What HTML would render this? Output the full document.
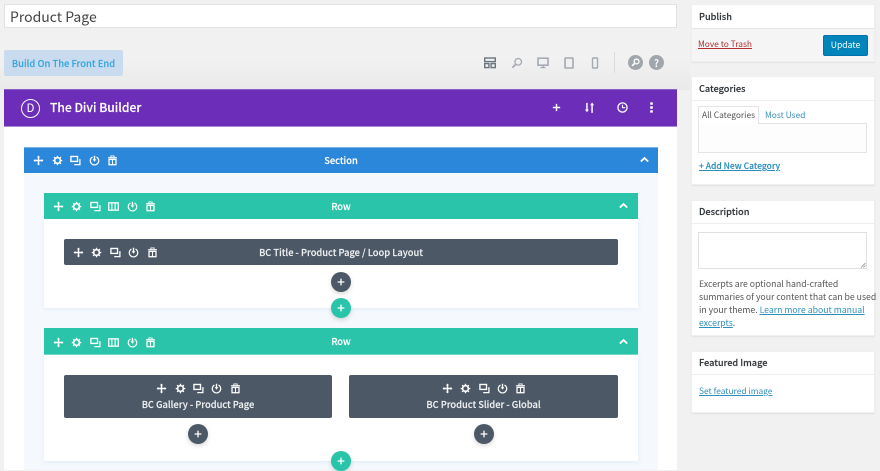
<!DOCTYPE html>
<html lang="en">
<head>
<meta charset="utf-8">
<title>Product Page</title>
<style>
html,body{margin:0;padding:0}
body{width:880px;height:470px;overflow:hidden;position:relative;background:#f1f1f1;font-family:"Noto Sans CJK JP","Liberation Sans",sans-serif;color:#444}
.a{position:absolute;box-sizing:border-box}
.t{position:absolute;white-space:nowrap}
.c{text-align:center}
.b{font-weight:500;-webkit-text-stroke:.15px currentColor}
svg{position:absolute;overflow:visible}
.ic{width:11px;height:11px;margin:.5px 0 0 .5px;fill:none;stroke:#fff;stroke-width:1.4}
.box{position:absolute;box-sizing:border-box;background:#fff;left:691px;width:184px;box-shadow:0 1px 1px rgba(0,0,0,.06);border:1px solid #efefef}
.line{position:absolute;left:691px;width:184px;height:1px;background:#eee}
.h{font-size:9.2px;font-weight:500;color:#32373c;left:699px;-webkit-text-stroke:.15px currentColor}
.lnk{color:#2e8fbd;text-decoration:underline;font-size:8.4px}
.circ{position:absolute;width:20px;height:20px;border-radius:50%;box-shadow:0 2px 5px rgba(0,0,0,.15)}
.d{background:#4c5866}.g{background:#29c4a9}
.x{font-size:8.7px;color:#555;left:699px;line-height:13px}
.m{font-size:9.3px}
</style>
</head>
<body>
<svg width="0" height="0" style="position:absolute">
<defs>
<symbol id="mv" viewBox="0 0 12 12"><path d="M6 1v10M1 6h10" stroke-width="1.6"/><path d="M4.4 2.6 6 .8l1.6 1.8zM4.4 9.4 6 11.2l1.6-1.8zM2.6 4.4.8 6l1.8 1.6zM9.4 4.4 11.2 6 9.4 7.6z" fill="#fff" stroke="none"/></symbol>
<symbol id="gr" viewBox="0 0 12 12"><circle cx="6" cy="6" r="3.1" stroke-width="1.8"/><path d="M6 .8v1.8M6 9.4v1.8M.8 6h1.8M9.4 6h1.8M2.3 2.3l1.3 1.3M8.4 8.4l1.3 1.3M2.3 9.7l1.3-1.3M8.4 3.6l1.3-1.3" stroke-width="1.5"/></symbol>
<symbol id="cp" viewBox="0 0 12 12"><rect x="1" y="1.6" width="7.2" height="5.4" stroke-width="1.5"/><path d="M10.8 4.5v6H4.6" stroke-width="1.4"/></symbol>
<symbol id="col" viewBox="0 0 12 12"><rect x=".8" y="2" width="10.4" height="8" stroke-width="1.4"/><path d="M4.2 2v8M7.8 2v8" stroke-width="1.3"/></symbol>
<symbol id="pw" viewBox="0 0 12 12"><path d="M3.8 2.2a4.6 4.6 0 1 0 4.4 0" stroke-width="1.3"/><path d="M6 .8v5" stroke-width="1.5"/><path d="M4 4.6h4L6 7.4z" fill="#fff" stroke="none"/></symbol>
<symbol id="tr" viewBox="0 0 12 12"><path d="M1.2 3h9.6" stroke-width="1.3"/><path d="M4.2 2.4V1h3.6v1.4" stroke-width="1"/><rect x="2.2" y="4.8" width="7.6" height="5.8" stroke-width="1.4"/><path d="M6 5v5.4" stroke-width="1.2"/></symbol>
<symbol id="ch" viewBox="0 0 12 12"><path d="M2 8.2 6 4.4l4 3.8" stroke-width="2"/></symbol>
<symbol id="pl" viewBox="0 0 20 20"><path d="M6.6 10h6.8M10 6.6v6.8" stroke="#fff" stroke-width="1.3" fill="none"/></symbol>
</defs>
</svg>

<!-- top gradient -->
<div class="a" style="left:0;top:60px;width:690px;height:30px;background:linear-gradient(#f1f1f1,#e9e9e9)"></div>

<!-- title -->
<div class="a" style="left:4px;top:4px;width:673px;height:24px;background:#fff;border:1px solid #e2e2e2"></div>
<div class="t" style="left:10px;top:7px;font-size:14px;line-height:20px;color:#444">Product Page</div>

<!-- build button -->
<div class="a" style="left:4px;top:50px;width:119px;height:26px;background:#c9dcef;border-radius:2px"></div>
<div class="t c b" style="left:4px;top:50px;width:119px;line-height:26px;font-size:9.4px;color:#3aa6dc">Build On The Front End</div>

<!-- toolbar -->
<svg style="left:484px;top:57px" width="12" height="12" viewBox="0 0 12 12" fill="none" stroke="#6b7580"><rect x=".7" y="1" width="10.6" height="3.6" stroke-width="1.4"/><rect x=".7" y="6.6" width="4.2" height="4" stroke-width="1.4"/><rect x="7.1" y="6.6" width="4.2" height="4" stroke-width="1.4"/></svg>
<svg style="left:511px;top:57px" width="12" height="12" viewBox="0 0 12 12" fill="none" stroke="#a5abb2"><circle cx="7.2" cy="4.8" r="3.3" stroke-width="1.3"/><path d="M4.6 7.4 1.4 10.6" stroke-width="1.8"/></svg>
<svg style="left:537px;top:57px" width="12" height="12" viewBox="0 0 12 12" fill="none" stroke="#a5abb2"><rect x="1" y="1.2" width="10" height="7" stroke-width="1.6"/><path d="M3.6 10.6h4.8M6 8.4v2" stroke-width="1.4"/></svg>
<svg style="left:563px;top:57px" width="12" height="12" viewBox="0 0 12 12" fill="none" stroke="#a5abb2"><rect x="2" y="1" width="8" height="10" rx=".6" stroke-width="1.6"/></svg>
<svg style="left:589px;top:57px" width="12" height="12" viewBox="0 0 12 12" fill="none" stroke="#a5abb2"><rect x="3.5" y="1" width="5" height="10" rx=".6" stroke-width="1.4"/></svg>
<div class="a" style="left:614px;top:52px;width:1px;height:21px;background:#dcdcdc"></div>
<div class="a" style="left:628px;top:55px;width:15px;height:15px;border-radius:50%;background:#a1a6ac"></div>
<svg style="left:631px;top:58px" width="9" height="9" viewBox="0 0 12 12" fill="none" stroke="#fff"><circle cx="7.4" cy="4.6" r="3.2" stroke-width="1.7"/><path d="M4.8 7.2 1.4 10.6" stroke-width="2.2"/></svg>
<div class="a" style="left:649px;top:55px;width:15px;height:15px;border-radius:50%;background:#a1a6ac"></div>
<div class="t c b" style="left:649px;top:55px;width:15px;line-height:15px;font-size:10px;color:#fff">?</div>

<!-- main panel -->
<div class="a" style="left:4px;top:127px;width:673px;height:343px;background:#fff"></div>
<div class="a" style="left:4px;top:89px;width:673px;height:38px;background:#6c2eb9;border-bottom:1px solid #a98ad6;border-top:1px solid #8a60c8"></div>
<div class="a" style="left:21px;top:99px;width:19px;height:19px;border:1px solid #fff;border-radius:50%"></div>
<div class="t c" style="left:21px;top:99px;width:19px;line-height:19px;font-size:11.5px;color:#fff">D</div>
<div class="t b" style="left:50px;top:99px;line-height:18px;font-size:12.1px;color:#fff">The Divi Builder</div>
<svg class="ic" style="left:550px;top:101px" viewBox="0 0 12 12"><path d="M2 6h8M6 2v8" stroke-width="1.6"/></svg>
<svg class="ic" style="left:583px;top:101px" viewBox="0 0 12 12"><path d="M3.2 1v8.4M8.8 3v8.8" stroke-width="1.6"/><path d="M1 8.2h4.4l-2.2 3zM6.6 3.6h4.4L8.8.6z" fill="#fff" stroke="none"/></svg>
<svg class="ic" style="left:616px;top:101px" viewBox="0 0 12 12"><circle cx="6" cy="6" r="5" stroke-width="1.4"/><path d="M6 3v3.2h3" stroke-width="1.3"/></svg>
<svg class="ic" style="left:645px;top:101px" viewBox="0 0 12 12"><path d="M6 .4v2.6M6 4.7v2.6M6 9v2.6" stroke-width="2.8"/></svg>

<!-- section -->
<div class="a" style="left:24px;top:173px;width:634px;height:297px;background:#f5f8fc"></div>
<div class="a" style="left:24px;top:147px;width:634px;height:26px;background:#2b87da;border-top:1px solid #79b2e8"></div>
<svg class="ic" style="left:32px;top:154px"><use href="#mv"/></svg>
<svg class="ic" style="left:51px;top:154px"><use href="#gr"/></svg>
<svg class="ic" style="left:69px;top:154px"><use href="#cp"/></svg>
<svg class="ic" style="left:88px;top:154px"><use href="#pw"/></svg>
<svg class="ic" style="left:106px;top:154px"><use href="#tr"/></svg>
<div class="t c b m" style="left:24px;top:147px;width:634px;line-height:26px;color:#fff">Section</div>
<svg class="ic" style="left:638px;top:153px"><use href="#ch"/></svg>

<!-- row 1 -->
<div class="a" style="left:44px;top:219px;width:594px;height:89px;background:#fff;box-shadow:0 1px 4px rgba(43,135,218,.1)"></div>
<div class="a" style="left:44px;top:193px;width:594px;height:26px;background:#29c4a9"></div>
<svg class="ic" style="left:52px;top:200px"><use href="#mv"/></svg>
<svg class="ic" style="left:70px;top:200px"><use href="#gr"/></svg>
<svg class="ic" style="left:89px;top:200px"><use href="#cp"/></svg>
<svg class="ic" style="left:107px;top:200px"><use href="#col"/></svg>
<svg class="ic" style="left:126px;top:200px"><use href="#pw"/></svg>
<svg class="ic" style="left:144px;top:200px"><use href="#tr"/></svg>
<div class="t c b m" style="left:44px;top:193px;width:594px;line-height:26px;color:#fff">Row</div>
<svg class="ic" style="left:617px;top:199px"><use href="#ch"/></svg>

<div class="a d" style="left:64px;top:239px;width:554px;height:26px;border-radius:2px"></div>
<svg class="ic" style="left:72px;top:246px"><use href="#mv"/></svg>
<svg class="ic" style="left:90px;top:246px"><use href="#gr"/></svg>
<svg class="ic" style="left:109px;top:246px"><use href="#cp"/></svg>
<svg class="ic" style="left:127px;top:246px"><use href="#pw"/></svg>
<svg class="ic" style="left:146px;top:246px"><use href="#tr"/></svg>
<div class="t c b m" style="left:64px;top:239px;width:554px;line-height:27px;color:#eef0f2">BC Title - Product Page / Loop Layout</div>
<div class="circ d" style="left:331px;top:272px"><svg width="20" height="20"><use href="#pl"/></svg></div>
<div class="circ g" style="left:331px;top:298px"><svg width="20" height="20"><use href="#pl"/></svg></div>

<!-- row 2 -->
<div class="a" style="left:44px;top:354px;width:594px;height:107px;background:#fff;box-shadow:0 1px 4px rgba(43,135,218,.1)"></div>
<div class="a" style="left:44px;top:328px;width:594px;height:27px;background:#29c4a9;border-bottom:1px solid #6fd8c6"></div>
<svg class="ic" style="left:52px;top:336px"><use href="#mv"/></svg>
<svg class="ic" style="left:70px;top:336px"><use href="#gr"/></svg>
<svg class="ic" style="left:89px;top:336px"><use href="#cp"/></svg>
<svg class="ic" style="left:107px;top:336px"><use href="#col"/></svg>
<svg class="ic" style="left:126px;top:336px"><use href="#pw"/></svg>
<svg class="ic" style="left:144px;top:336px"><use href="#tr"/></svg>
<div class="t c b m" style="left:44px;top:328px;width:594px;line-height:27px;color:#fff">Row</div>
<svg class="ic" style="left:617px;top:335px"><use href="#ch"/></svg>

<div class="a d" style="left:64px;top:375px;width:268px;height:43px;border-radius:2px"></div>
<svg class="ic" style="left:155px;top:382px"><use href="#mv"/></svg>
<svg class="ic" style="left:174px;top:382px"><use href="#gr"/></svg>
<svg class="ic" style="left:192px;top:382px"><use href="#cp"/></svg>
<svg class="ic" style="left:210px;top:382px"><use href="#pw"/></svg>
<svg class="ic" style="left:229px;top:382px"><use href="#tr"/></svg>
<div class="t c b m" style="left:64px;top:395px;width:268px;line-height:18px;color:#eef0f2">BC Gallery - Product Page</div>

<div class="a d" style="left:349px;top:375px;width:269px;height:43px;border-radius:2px"></div>
<svg class="ic" style="left:441px;top:382px"><use href="#mv"/></svg>
<svg class="ic" style="left:459px;top:382px"><use href="#gr"/></svg>
<svg class="ic" style="left:478px;top:382px"><use href="#cp"/></svg>
<svg class="ic" style="left:496px;top:382px"><use href="#pw"/></svg>
<svg class="ic" style="left:514px;top:382px"><use href="#tr"/></svg>
<div class="t c b m" style="left:349px;top:395px;width:269px;line-height:18px;color:#eef0f2">BC Product Slider - Global</div>

<div class="circ d" style="left:188px;top:424px"><svg width="20" height="20"><use href="#pl"/></svg></div>
<div class="circ d" style="left:474px;top:424px"><svg width="20" height="20"><use href="#pl"/></svg></div>
<div class="circ g" style="left:331px;top:451px"><svg width="20" height="20"><use href="#pl"/></svg></div>

<!-- publish -->
<div class="box" style="top:4px;height:58px"></div>
<div class="a" style="left:692px;top:28px;width:182px;height:33px;background:#f5f5f5;border-top:1px solid #e6e6e6"></div>
<div class="t h" style="top:9px;line-height:14px">Publish</div>
<div class="t" style="left:698px;top:38px;line-height:13px;font-size:8.4px;color:#b32d2e;text-decoration:underline">Move to Trash</div>
<div class="a" style="left:823px;top:35px;width:45px;height:21px;background:#0085ba;border-radius:2px;border:1px solid #0073aa"></div>
<div class="t c" style="left:823px;top:35px;width:45px;line-height:21px;font-size:8.6px;color:#fff">Update</div>

<!-- categories -->
<div class="box" style="top:76px;height:109px"></div>
<div class="line" style="top:100px"></div>
<div class="t h" style="top:81px;line-height:14px">Categories</div>
<div class="a" style="left:698px;top:123px;width:169px;height:30px;background:#fdfdfd;border:1px solid #e4e4e4"></div>
<div class="a" style="left:698px;top:106px;width:61px;height:18px;background:#fff;border:1px solid #e4e4e4;border-bottom:none"></div>
<div class="t" style="left:702px;top:108px;line-height:14px;font-size:8.4px;color:#555">All Categories</div>
<div class="t" style="left:765px;top:108px;line-height:14px;font-size:8.4px;color:#3a92bd">Most Used</div>
<div class="t lnk b" style="left:699px;top:160px;line-height:13px;font-size:8.5px">+ Add New Category</div>

<!-- description -->
<div class="box" style="top:200px;height:136px"></div>
<div class="line" style="top:223px"></div>
<div class="t h" style="top:204px;line-height:14px">Description</div>
<div class="a" style="left:698px;top:232px;width:169px;height:37px;background:#fff;border:1px solid #e0e0e0"></div>
<svg style="left:860px;top:262px" width="6" height="6" fill="none" stroke="#888" stroke-width=".8"><path d="M1 5.5 5.5 1M3.4 5.5 5.5 3.4"/></svg>
<div class="t x" style="top:277px">Excerpts are optional hand-crafted</div>
<div class="t x" style="top:290px">summaries of your content that can be used</div>
<div class="t x" style="top:303px">in your theme. <span style="color:#2e8fbd;text-decoration:underline">Learn more about manual</span></div>
<div class="t x" style="top:316px"><span style="color:#2e8fbd;text-decoration:underline">excerpts</span>.</div>

<!-- featured -->
<div class="box" style="top:351px;height:62px"></div>
<div class="line" style="top:374px"></div>
<div class="t h" style="top:355px;line-height:14px">Featured Image</div>
<div class="t lnk" style="left:699px;top:385px;line-height:13px">Set featured image</div>
</body>
</html>
